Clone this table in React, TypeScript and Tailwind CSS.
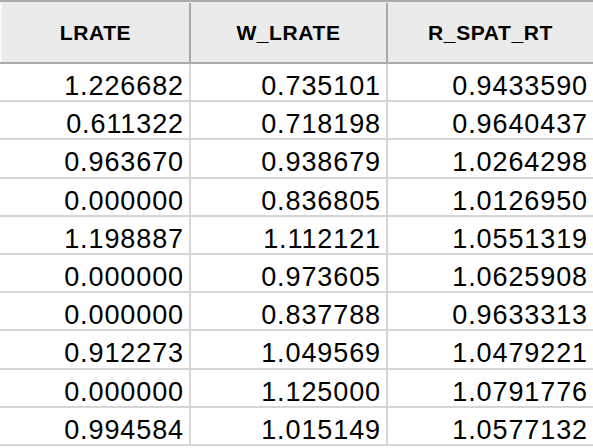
const columns = ["LRATE", "W_LRATE", "R_SPAT_RT"];

const rows: string[][] = [
  ["1.226682", "0.735101", "0.9433590"],
  ["0.611322", "0.718198", "0.9640437"],
  ["0.963670", "0.938679", "1.0264298"],
  ["0.000000", "0.836805", "1.0126950"],
  ["1.198887", "1.112121", "1.0551319"],
  ["0.000000", "0.973605", "1.0625908"],
  ["0.000000", "0.837788", "0.9633313"],
  ["0.912273", "1.049569", "1.0479221"],
  ["0.000000", "1.125000", "1.0791776"],
  ["0.994584", "1.015149", "1.0577132"],
];

export default function App() {
  return (
    <div
      className="w-[593px] h-[448px] overflow-hidden bg-white text-black"
      style={{ fontFamily: '"Liberation Sans", Arial, sans-serif' }}
    >
      {/* header */}
      <div className="grid grid-cols-[191px_197px_1fr] border-t-2 border-t-[#a9a9a9] border-b-2 border-b-[#aaaaaa] bg-[#ebebeb] h-[64px] pt-px">
        {columns.map((c, i) => (
          <div
            key={c}
            className={
              "flex items-center justify-center text-[21px] font-bold tracking-[0.6px] " +
              (i === 0 ? "border-l-2 border-l-[#f8f8f8] " : "") +
              (i < 2 ? "border-r-2 border-r-[#a8a8a8]" : "")
            }
          >
            {c}
          </div>
        ))}
      </div>

      {/* body */}
      {rows.map((r, ri) => (
        <div
          key={ri}
          className="grid grid-cols-[191px_197px_1fr] h-[38.2px] border-b-2 border-b-[#d6d6d6]"
        >
          {r.map((v, ci) => (
            <div
              key={ci}
              className={
                "text-right pr-[5px] pt-[9px] text-[27px] leading-none tracking-[0.9px] " +
                (ci < 2 ? "border-r-2 border-r-[#d6d6d6]" : "")
              }
            >
              {v}
            </div>
          ))}
        </div>
      ))}
    </div>
  );
}
